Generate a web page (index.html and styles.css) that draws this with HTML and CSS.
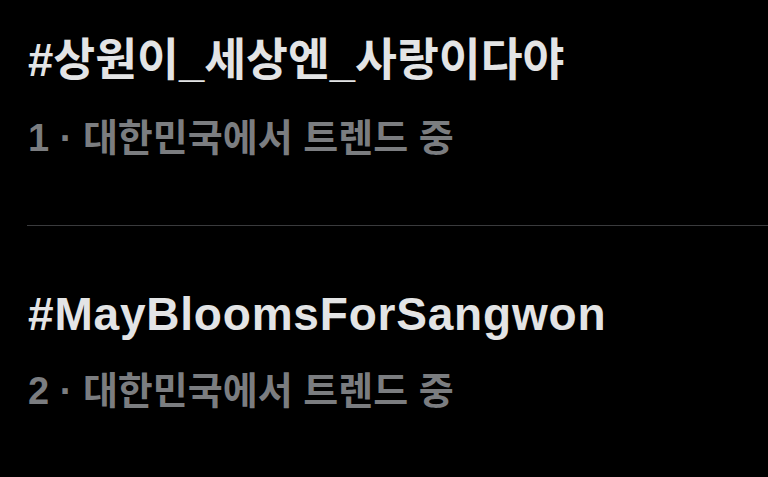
FILE: index.html
```html
<!DOCTYPE html>
<html lang="ko">
<head>
  <meta charset="UTF-8" />
  <meta name="viewport" content="width=device-width, initial-scale=1.0"/>
  <title>트렌드</title>
  <link rel="stylesheet" href="styles.css">
</head>
<body>
  <div class="trends">
    <div class="trend">
      <div class="trend-name">#상원이_세상엔_사랑이다야</div>
      <div class="trend-meta">1 · 대한민국에서 트렌드 중</div>
    </div>
    <div class="divider"></div>
    <div class="trend">
      <div class="trend-name trend-name-latin">#MayBloomsForSangwon</div>
      <div class="trend-meta">2 · 대한민국에서 트렌드 중</div>
    </div>
  </div>
</body>
</html>
```

FILE: styles.css
```css
body {
  margin: 0;
  background: #000;
  font-family: "Liberation Sans", "Noto Sans CJK KR", sans-serif;
}
.trends {
  padding-top: 32px;
}
.trend {
  padding-left: 28px;
}
.trend-name {
  color: #e3e4e5;
  font-size: 45.5px;
  font-weight: 700;
  line-height: 58px;
  height: 58px;
}
.trend-name-latin {
  font-size: 46px;
  letter-spacing: 0.8px;
}
.trend-meta {
  color: #7b7d80;
  font-size: 38px;
  font-weight: 700;
  line-height: 52px;
  height: 52px;
  margin-top: 22px;
}
.divider {
  border-top: 1px solid #3a3b3d;
  margin: 61px 0 59px 27px;
}
```
